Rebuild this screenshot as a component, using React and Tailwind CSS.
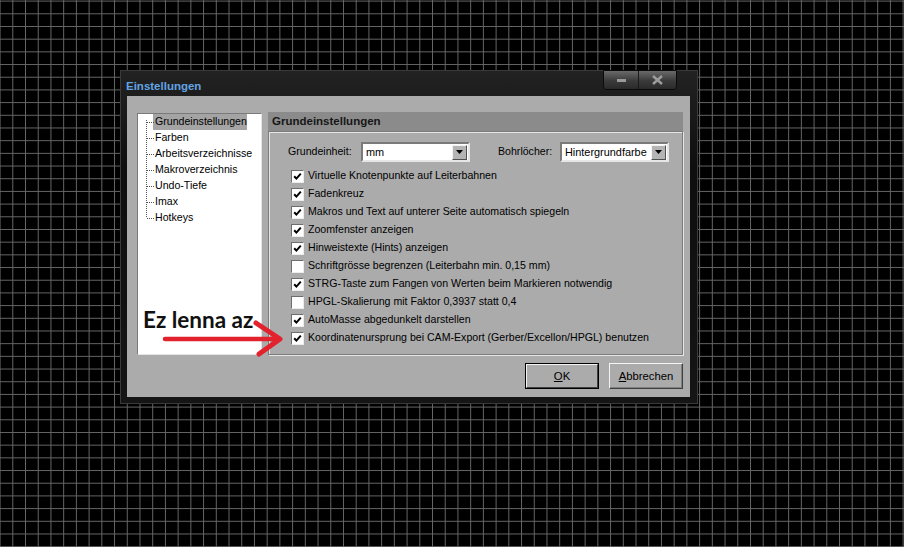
import { useState } from 'react'

const options = [
  [true, 'Virtuelle Knotenpunkte auf Leiterbahnen'],
  [true, 'Fadenkreuz'],
  [true, 'Makros und Text auf unterer Seite automatisch spiegeln'],
  [true, 'Zoomfenster anzeigen'],
  [true, 'Hinweistexte (Hints) anzeigen'],
  [false, 'Schriftgrösse begrenzen (Leiterbahn min. 0,15 mm)'],
  [true, 'STRG-Taste zum Fangen von Werten beim Markieren notwendig'],
  [false, 'HPGL-Skalierung mit Faktor 0,3937 statt 0,4'],
  [true, 'AutoMasse abgedunkelt darstellen'],
  [true, 'Koordinatenursprung bei CAM-Export (Gerber/Excellon/HPGL) benutzen'],
]

const tree = ['Grundeinstellungen', 'Farben', 'Arbeitsverzeichnisse', 'Makroverzeichnis', 'Undo-Tiefe', 'Imax', 'Hotkeys']

function Check({ checked, onClick }) {
  return (
    <span onClick={onClick}
      className="w-[13px] h-[13px] shrink-0 bg-white border border-t-[#6e6e6e] border-l-[#6e6e6e] border-r-[#ececec] border-b-[#ececec] flex items-center justify-center">
      {checked && (
        <svg width="9" height="9" viewBox="0 0 9 9">
          <path d="M1.2 4.2 L3.4 6.6 L7.8 1.6" stroke="#000" strokeWidth="2" fill="none" />
        </svg>
      )}
    </span>
  )
}

function Select({ value, width }) {
  return (
    <div className={`${width} h-[20px] bg-white border-2 border-t-[#7a7a7a] border-l-[#7a7a7a] border-r-[#e6e6e6] border-b-[#e6e6e6] flex items-center justify-between pl-[3px] pr-[1px]`}>
      <span className="text-[10.9px] leading-none text-black whitespace-nowrap">{value}</span>
      <span className="w-[15px] h-[15px] shrink-0 bg-[#b4b4b4] border border-t-[#f2f2f2] border-l-[#f2f2f2] border-r-[#505050] border-b-[#505050] flex items-center justify-center">
        <svg width="7" height="4" viewBox="0 0 7 4"><path d="M0 0 H7 L3.5 4 Z" fill="#000" /></svg>
      </span>
    </div>
  )
}

export default function App() {
  const [checks, setChecks] = useState(options.map(o => o[0]))

  return (
    <div className="relative w-[904px] h-[547px] overflow-hidden bg-black bg-[linear-gradient(to_right,#666_1px,transparent_1px),linear-gradient(to_bottom,#666_1px,transparent_1px)] [background-size:12.72px_12.7px] [background-position:12.3px_13.3px] pl-[120px] pt-[70px] font-['Liberation_Sans',Arial,sans-serif]">
      {/* Dialog window */}
      <div className="w-[578px] h-[334px] flex flex-col bg-[linear-gradient(to_bottom,#222,#0e0e0e_30%,#151515)] border border-[#3a3a3a]">
        {/* Title bar */}
        <div className="h-[25px] flex justify-between items-start">
          <span className="pl-[5px] pt-[8px] text-[11.5px] font-bold leading-[14px] text-[#62a4e4]">Einstellungen</span>
          <div className="mr-[20px] flex h-[20px] -mt-px rounded-b-[4px] border border-[#0a0a0a] overflow-hidden">
            <div className="w-[35px] bg-[linear-gradient(to_bottom,#6a6a6a,#3a3a3a_55%,#2a2a2a)] flex items-center justify-center border-r border-[#1a1a1a]">
              <span className="w-[9px] h-[3px] bg-[#9a9a9a]" />
            </div>
            <div className="w-[37px] bg-[linear-gradient(to_bottom,#6a6a6a,#3a3a3a_55%,#2a2a2a)] flex items-center justify-center">
              <svg width="11" height="10" viewBox="0 0 11 10"><path d="M1 1 L10 9 M10 1 L1 9" stroke="#9c9c9c" strokeWidth="2.4" /></svg>
            </div>
          </div>
        </div>

        {/* Client area */}
        <div className="flex-1 ml-[6px] mr-[7px] mb-[6px] bg-[#ababab] flex flex-col pl-[10px] pt-[16px] pr-[7px]">
          <div className="flex gap-[6px] items-start">
            {/* Tree */}
            <div className="relative mt-px w-[125px] h-[242px] bg-white border border-t-[#7a7a7a] border-l-[#7a7a7a] border-r-[#e4e4e4] border-b-[#e4e4e4]">
              <svg className="absolute left-[8px] top-0" width="9" height="110" viewBox="0 0 9 110">
                <line x1="0.5" y1="6" x2="0.5" y2="104" stroke="#555" strokeDasharray="1 1" />
                {tree.map((t, i) => (
                  <line key={t} x1="1" y1={8.5 + i * 16} x2="8" y2={8.5 + i * 16} stroke="#555" strokeDasharray="1 1" />
                ))}
              </svg>
              <div className="flex flex-col pl-[15px]">
                {tree.map((t, i) => (
                  <div key={t} className="h-[16px] flex items-center">
                    <span className={`px-[2px] h-[16px] flex items-center text-[10.6px] text-black ${i === 0 ? 'bg-[#a4a4a4] w-[94px]' : ''}`}>{t}</span>
                  </div>
                ))}
              </div>
            </div>

            {/* Settings panel */}
            <div className="w-[415px] flex flex-col">
              <div className="h-[19px] bg-[#8b8b8b] flex items-center pl-[4px]">
                <span className="text-[11.5px] font-bold text-[#161616]">Grundeinstellungen</span>
              </div>
              <div className="h-[224px] border border-[#7c7c7c] shadow-[inset_1px_1px_0_#e6e6e6,1px_1px_0_#e6e6e6] flex flex-col pt-[10px]">
                <div className="flex items-center pl-[19px]">
                  <span className="w-[73px] text-[10.6px] text-black">Grundeinheit:</span>
                  <Select value="mm" width="w-[109px]" />
                  <span className="ml-[28px] w-[62px] text-[10.6px] text-black">Bohrlöcher:</span>
                  <Select value="Hintergrundfarbe" width="w-[109px]" />
                </div>
                <div className="flex flex-col pl-[22px] mt-[5px]">
                  {options.map(([, label], i) => (
                    <div key={label} className="h-[18px] flex items-center gap-[4px]">
                      <Check checked={checks[i]} onClick={() => setChecks(c => c.map((v, j) => (j === i ? !v : v)))} />
                      <span className="text-[10.6px] text-black whitespace-nowrap">{label}</span>
                    </div>
                  ))}
                </div>
              </div>
            </div>
          </div>

          {/* Buttons */}
          <div className="flex justify-end gap-[10px] mt-[8px]">
            <button className="w-[74px] h-[26px] border border-black">
              <span className="w-full h-full flex items-center justify-center bg-[#ababab] border border-t-[#f4f4f4] border-l-[#f4f4f4] border-r-[#404040] border-b-[#404040] text-[11.3px] text-black">
                <span><span className="underline">O</span>K</span>
              </span>
            </button>
            <button className="w-[74px] h-[26px] flex items-center justify-center bg-[#ababab] border border-t-[#f4f4f4] border-l-[#f4f4f4] border-r-[#404040] border-b-[#404040] shadow-[inset_-1px_-1px_0_#808080] text-[11.3px] text-black">
              <span><span className="underline">A</span>bbrechen</span>
            </button>
          </div>
        </div>
      </div>

      {/* Annotation overlay */}
      <span className="absolute left-[143px] top-[306px] font-['Lato',sans-serif] font-bold text-[22.5px] leading-[28px] text-[#111]">Ez lenna az</span>
      <svg className="absolute left-[160px] top-[316px]" width="130" height="44" viewBox="0 0 130 44">
        <path d="M5 23 H118" stroke="#e2222c" strokeWidth="4.5" strokeLinecap="round" />
        <path d="M96 7 L120 23 L99 38" stroke="#e2222c" strokeWidth="5" fill="none" strokeLinecap="round" strokeLinejoin="round" />
      </svg>
    </div>
  )
}
